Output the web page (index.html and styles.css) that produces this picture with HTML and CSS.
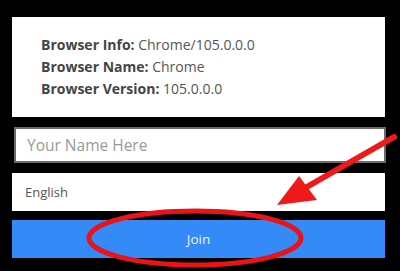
FILE: index.html
```html
<!DOCTYPE html>
<html>
<head>
<meta charset="utf-8">
<link rel="stylesheet" href="styles.css">
</head>
<body>
<div class="page">
  <div class="info">
    <div class="line"><b>Browser Info:</b> Chrome/105.0.0.0</div>
    <div class="line"><b>Browser Name:</b> Chrome</div>
    <div class="line"><b>Browser Version:</b> 105.0.0.0</div>
  </div>
  <div class="name-input">Your Name Here</div>
  <div class="select">English</div>
  <div class="join">Join</div>
</div>
<svg class="annot" width="400" height="271" viewBox="0 0 400 271">
  <ellipse cx="195" cy="238" rx="106" ry="27" fill="none" stroke="#e8141a" stroke-width="5"/>
  <line x1="394" y1="137" x2="305" y2="188" stroke="#ee1a1a" stroke-width="6" stroke-linecap="round"/>
  <polygon points="277,205 299,176 317,200" fill="#ee1a1a"/>
</svg>
</body>
</html>
```
FILE: styles.css
```css
html, body {
  margin: 0;
  padding: 0;
  background: #000;
}
body {
  width: 400px;
  height: 271px;
  position: relative;
  overflow: hidden;
  font-family: "Open Sans", "Liberation Sans", sans-serif;
}
.page {
  padding: 17px 15px 0 12px;
  display: flex;
  flex-direction: column;
}
.info {
  background: #fff;
  height: 100px;
  box-sizing: border-box;
  padding: 17px 0 0 29px;
  font-size: 14px;
  line-height: 22px;
  color: #555;
}
.info b {
  color: #444;
  font-weight: 700;
}
.name-input {
  margin: 10px -1px 0 2px;
  height: 36px;
  box-sizing: border-box;
  border: 2px solid #6b6b6b;
  background: #fff;
  color: #9a9a9a;
  font-size: 15.5px;
  padding-left: 11px;
  display: flex;
  align-items: center;
}
.select {
  margin-top: 10px;
  height: 38px;
  background: #fff;
  color: #555;
  font-size: 13px;
  padding-left: 13px;
  display: flex;
  align-items: center;
}
.join {
  margin-top: 9px;
  height: 38px;
  background: #348af6;
  color: #eef4ff;
  font-size: 13.5px;
  display: flex;
  align-items: center;
  justify-content: center;
}
.annot {
  position: absolute;
  left: 0;
  top: 0;
}
```
